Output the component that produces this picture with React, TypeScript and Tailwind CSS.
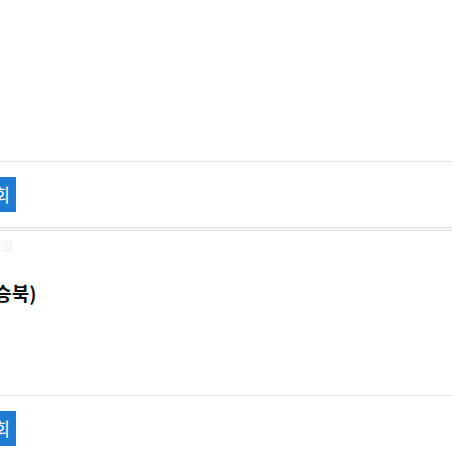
import React from "react";

const font = { fontFamily: '"Noto Sans CJK KR", "Noto Sans", sans-serif' };

function ActionRow() {
  return (
    <div className="border-t border-[#e1e1e1] py-[15px]">
      <button
        className="-ml-[29px] flex h-[35px] w-[45px] items-center justify-center bg-[#1d7bd3] text-[18px] text-white"
        style={font}
      >
        조회
      </button>
    </div>
  );
}

export default function App() {
  return (
    <div className="h-[452px] w-[452px] overflow-hidden bg-white" style={font}>
      <div className="flex flex-col">
        {/* first entry, only its lower part shows */}
        <div className="border-b border-[#e1e1e1] bg-white">
          <div className="h-[161px]" />
          <ActionRow />
        </div>
        <div className="h-[2px] bg-[#f5f5f5]" />
        {/* second entry */}
        <div className="border-y border-[#e1e1e1] bg-white">
          <div className="flex h-[164px] flex-col">
            <div className="-ml-[20px] mt-[8px] h-[14px] text-[12px] leading-[14px] text-[#ececec]">
              등록일
            </div>
            <div className="-ml-[13px] mt-[26px] h-[28px] text-[19px] font-bold leading-[28px] text-[#111]">
              (승북)
            </div>
          </div>
          <ActionRow />
        </div>
      </div>
    </div>
  );
}
